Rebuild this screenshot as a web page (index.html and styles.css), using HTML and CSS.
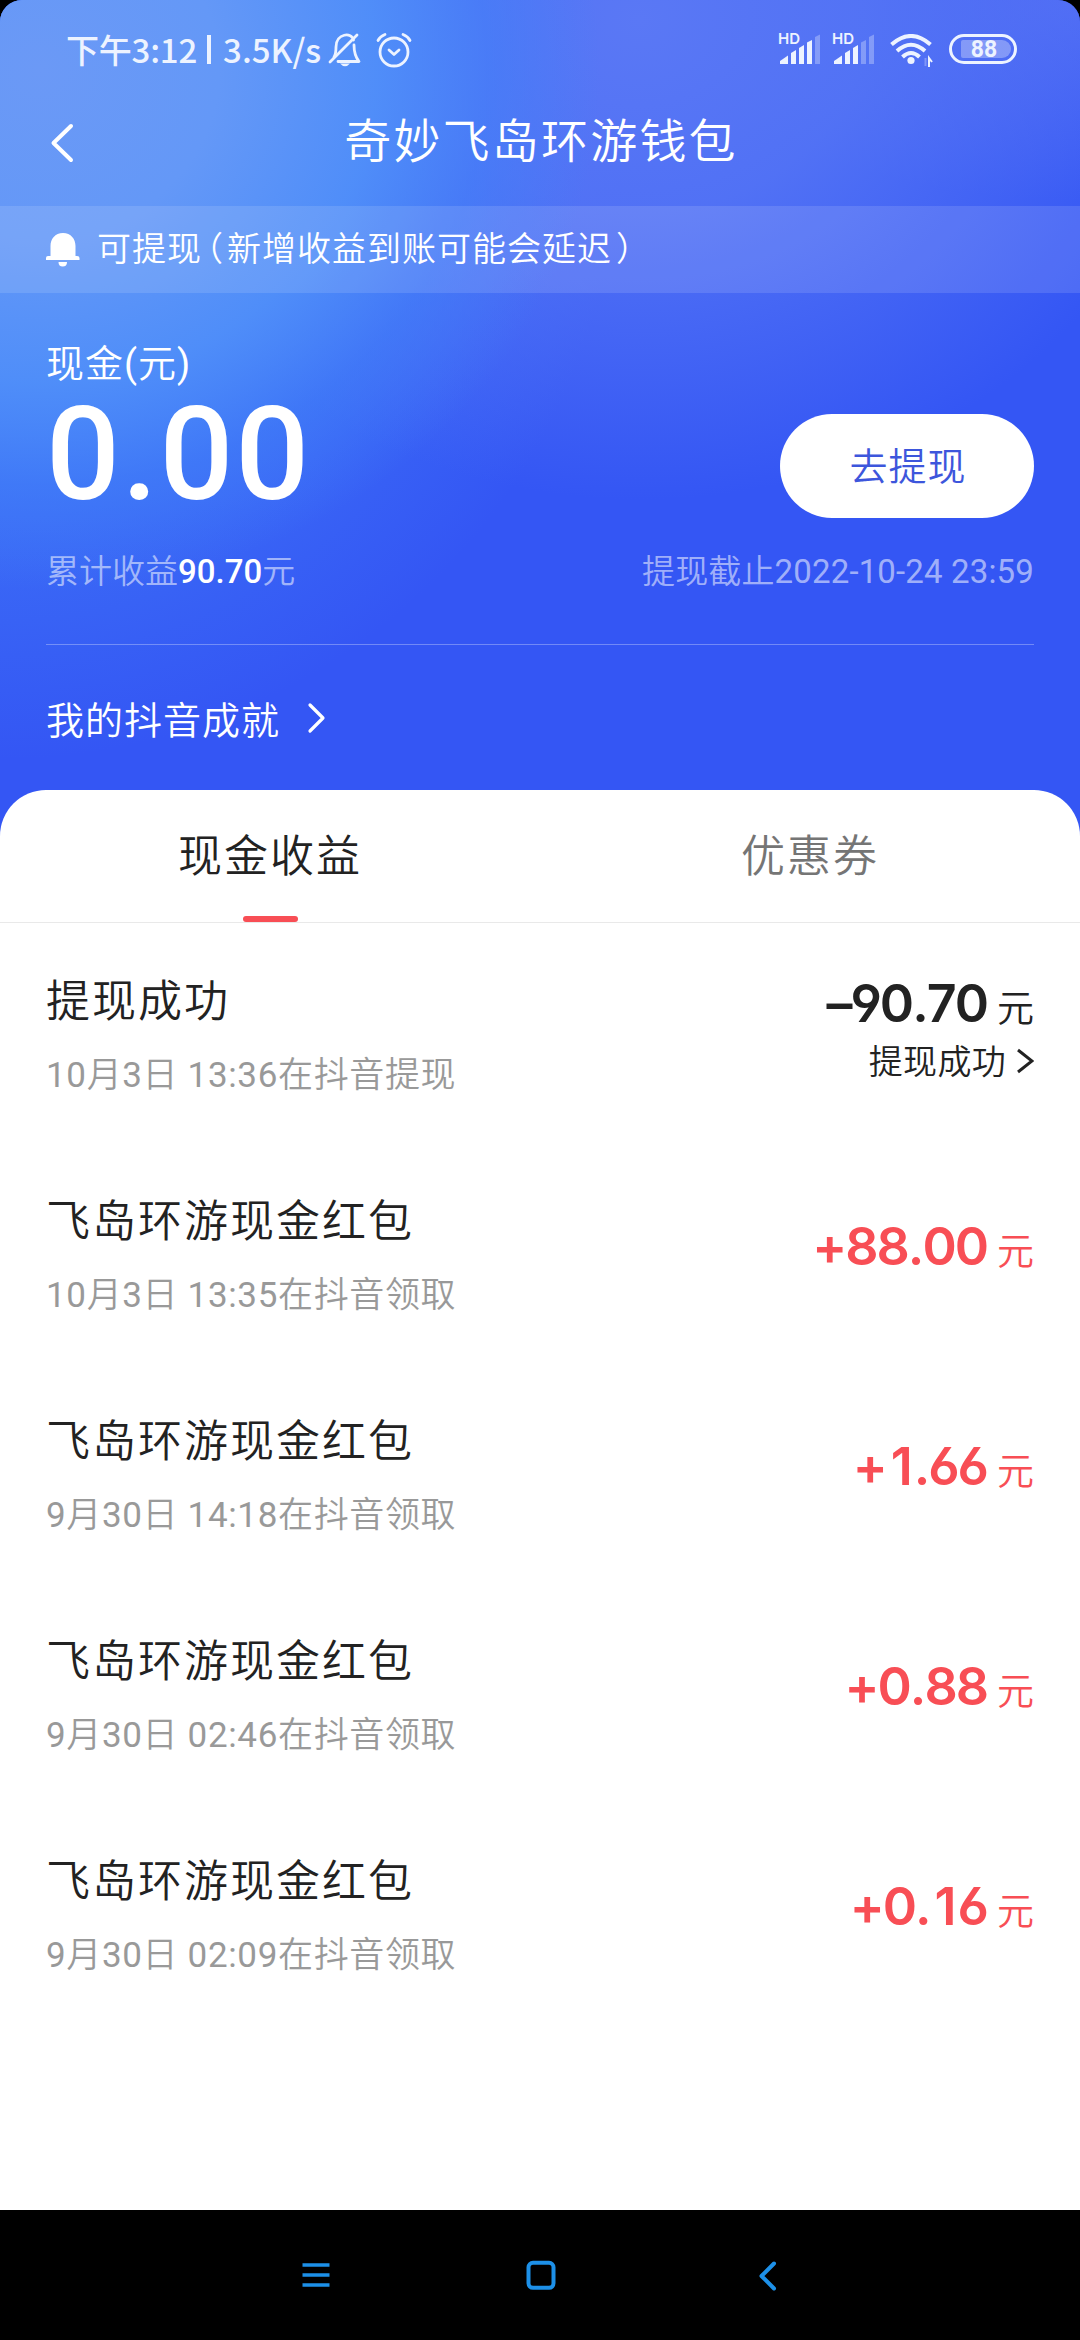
FILE: index.html
```html
<!DOCTYPE html>
<html lang="zh-CN">
<head>
<meta charset="utf-8">
<title>奇妙飞岛环游钱包</title>
<link rel="stylesheet" href="styles.css">
</head>
<body>
<div class="screen">
  <header class="hero">
    <div class="status">
      <div class="status-left">
        <span class="clock">下午3:12</span>
        <span class="bar"></span>
        <span class="speed">3.5K/s</span>
        <svg class="mute" width="34" height="36" viewBox="0 0 34 36" fill="none" stroke="currentColor" stroke-width="2.8" stroke-linecap="round" stroke-linejoin="round"><path d="M6 25 Q8 22 8 15 C8 1 24 0 25.5 8"/><path d="M26 13 C26 21 27.500 25 31 29.500 H10"/><path d="M2 30 L29 3"/><path d="M12 31.500 H22 Q17 37 12 31.500Z" fill="currentColor" stroke="none"/></svg>
        <svg class="alarm" width="36" height="36" viewBox="0 0 36 36" fill="none" stroke="currentColor" stroke-width="2.800" stroke-linecap="round" stroke-linejoin="round"><circle cx="18" cy="20" r="14"/><path d="M2 8.500 Q4 4.500 9 2.500 M34 8.500 Q32 4.500 27 2.500"/><path d="M13 18 L18 22.500 L23 18"/></svg>
      </div>
      <div class="status-right">
        <span class="signal"><span class="hd">HD</span>
          <svg width="42" height="32" viewBox="0 0 42 32" fill="currentColor"><path d="M0 31 V28 L8 22.500 V31Z"/><path d="M11 31 V20 L16 17 V31Z"/><path d="M19 31 V15 L24 12 V31Z"/><path d="M27 31 V9.500 L32 7 V31Z"/><path d="M35 31 V4 L40 1.500 V31Z" opacity=".32"/></svg></span>
        <span class="signal"><span class="hd">HD</span>
          <svg width="42" height="32" viewBox="0 0 42 32" fill="currentColor"><path d="M0 31 V28 L8 22.500 V31Z"/><path d="M11 31 V20 L16 17 V31Z"/><path d="M19 31 V15 L24 12 V31Z"/><path d="M27 31 V9.500 L32 7 V31Z" opacity=".32"/><path d="M35 31 V4 L40 1.500 V31Z" opacity=".32"/></svg></span>
        <svg class="wifi" width="44" height="34" viewBox="0 0 44 34" fill="none" stroke="currentColor" stroke-width="4"><path d="M1.500 10.500 Q21 -6.500 40.500 10.500"/><path d="M7 17 Q21 4.500 35 17"/><path d="M12.500 23 Q21 15 29.500 23"/><circle cx="21" cy="26.500" r="3.600" fill="currentColor" stroke="none"/><path d="M39 33 V24 L42 28" stroke-width="2"/><path d="M35.500 24 V32" stroke-width="2" opacity=".3"/></svg>
        <span class="battery"><span class="level">88</span></span>
      </div>
    </div>

    <div class="titlebar">
      <svg class="back" width="26" height="42" viewBox="0 0 26 42" fill="none" stroke="currentColor" stroke-width="4" stroke-linecap="round" stroke-linejoin="round"><path d="M21 4 L3.500 21 L21 38"/></svg>
      <h1>奇妙飞岛环游钱包</h1>
    </div>

    <div class="notice">
      <svg width="34" height="34" viewBox="0 0 34 34" fill="currentColor"><path d="M17 0 C9 0 4.500 6 4.500 13 V23 H2 Q0 23 0 25 V27 H33.500 V25 Q33.500 23 31 23 H29.500 V13 C29.500 6 25 0 17 0Z"/><path d="M12.500 29 H21 Q21 33.500 16.700 33.500 Q12.500 33.500 12.500 29Z"/></svg>
      <p>可提现<span class="paren">（</span>新增收益到账可能会延迟<span class="paren">）</span></p>
    </div>

    <div class="balance">
      <div class="cash">
        <div class="label">现金(元)</div>
        <div class="value">0.00</div>
      </div>
      <button class="withdraw">去提现</button>
    </div>
    <div class="meta">
      <span>累计收益<b>90.70</b>元</span>
      <span class="deadline">提现截止2022-10-24 23:59</span>
    </div>
    <div class="achieve">
      <span>我的抖音成就</span>
      <svg width="20" height="32" viewBox="0 0 20 32" fill="none" stroke="currentColor" stroke-width="3.200" stroke-linecap="round" stroke-linejoin="round"><path d="M3 3 L16 16 L3 29"/></svg>
    </div>
  </header>

  <main class="sheet">
    <nav class="tabs">
      <div class="tab active">现金收益</div>
      <div class="tab">优惠券</div>
    </nav>
    <ul class="list">
      <li class="row out">
        <div class="info"><div class="name">提现成功</div><div class="time">10月3日 13:36在抖音提现</div></div>
        <div class="side">
          <div class="amount"><b>–90.70</b><i>元</i></div>
          <div class="state">提现成功<svg width="18" height="28" viewBox="0 0 18 28" fill="none" stroke="currentColor" stroke-width="3"><path d="M2 4 L16 15 L2 26"/></svg></div>
        </div>
      </li>
      <li class="row">
        <div class="info"><div class="name">飞岛环游现金红包</div><div class="time">10月3日 13:35在抖音领取</div></div>
        <div class="side"><div class="amount"><b>+88.00</b><i>元</i></div></div>
      </li>
      <li class="row">
        <div class="info"><div class="name">飞岛环游现金红包</div><div class="time">9月30日 14:18在抖音领取</div></div>
        <div class="side"><div class="amount"><b>+<span class="one">1</span>.66</b><i>元</i></div></div>
      </li>
      <li class="row">
        <div class="info"><div class="name">飞岛环游现金红包</div><div class="time">9月30日 02:46在抖音领取</div></div>
        <div class="side"><div class="amount"><b>+0.88</b><i>元</i></div></div>
      </li>
      <li class="row">
        <div class="info"><div class="name">飞岛环游现金红包</div><div class="time">9月30日 02:09在抖音领取</div></div>
        <div class="side"><div class="amount"><b>+0.<span class="one">1</span>6</b><i>元</i></div></div>
      </li>
    </ul>
  </main>

  <footer class="navbar">
    <svg class="menu" width="30" height="30" viewBox="0 0 30 30" fill="none" stroke="currentColor" stroke-width="3.300"><path d="M1.500 5 H28.500 M1.500 15 H28.500 M1.500 25 H28.500"/></svg>
    <svg class="home" width="30" height="30" viewBox="0 0 30 30" fill="none" stroke="currentColor" stroke-width="4"><rect x="2.500" y="2.800" width="25" height="25" rx="4.500"/></svg>
    <svg width="20" height="32" viewBox="0 0 20 32" fill="none" stroke="currentColor" stroke-width="4" stroke-linecap="round" stroke-linejoin="round"><path d="M16 3.500 L3.500 16 L16 28.500"/></svg>
  </footer>
</div>
</body>
</html>
```
FILE: styles.css
```css
* { box-sizing: border-box; margin: 0; padding: 0; }

body {
  width: 1080px;
  background: #000;
  font-family: Roboto, "Noto Sans CJK SC DemiLight", "Noto Sans CJK SC", sans-serif;
  font-weight: 400;
  color: #222;
}

svg { display: block; flex: none; }

.screen {
  display: flex;
  flex-direction: column;
  width: 1080px;
  height: 2340px;
  overflow: hidden;
  border-radius: 22px 22px 0 0;
}

/* Blue wallet header */
.hero {
  height: 840px;
  flex: none;
  color: #fff;
  background:
    radial-gradient(ellipse 560px 520px at 40px 70px, #6b99f6 0%, rgba(100, 152, 247, 1) 32%, rgba(80, 143, 249, .95) 60%, rgba(66, 128, 248, .6) 80%, rgba(56, 100, 245, 0) 100%),
    radial-gradient(ellipse 560px 480px at 640px 20px, #5a78f5 0%, rgba(86, 118, 245, .85) 40%, rgba(60, 90, 245, 0) 100%),
    radial-gradient(ellipse 620px 620px at 0 140px, rgba(66, 128, 248, .9) 0%, rgba(66, 128, 248, .7) 45%, rgba(52, 86, 244, 0) 100%),
    radial-gradient(ellipse 420px 200px at 1080px 0, rgba(86, 112, 245, .8) 0%, rgba(60, 90, 245, 0) 100%),
    #3456f4;
}

.status {
  display: flex;
  justify-content: space-between;
  height: 100px;
  padding: 0 63px 0 66px;
  color: #edf3ff;
}

.status-left {
  display: flex;
  align-items: center;
  height: 99px;
  font: 500 33px/40px "Noto Sans CJK SC", sans-serif;
}
.clock { letter-spacing: -.2px; }
.clock, .speed { padding-bottom: 2px; }
.bar { width: 4px; height: 29px; margin: 0 12px 0 10px; background: currentColor; }
.mute { margin-left: 7px; }
.alarm { margin-left: 14px; }

.status-right { display: flex; align-items: flex-start; padding-top: 33px; }
.signal { position: relative; width: 42px; margin-right: 12px; }
.signal .hd {
  position: absolute;
  left: -2px;
  top: -2px;
  font: 600 15px/15px Inter, sans-serif;
}
.wifi { margin: 1px 15px 0 2px; }
.battery {
  width: 68px;
  height: 30px;
  margin-top: 1px;
  padding: 3px 2px 3px 9px;
  border: 3.500px solid currentColor;
  border-radius: 15px;
}
.level {
  display: block;
  width: 50px;
  height: 18px;
  padding-right: 4px;
  border-radius: 2px 9px 9px 2px;
  background: rgba(255, 255, 255, .3);
  font: 700 23px/20px Roboto, sans-serif;
  text-align: center;
}

.titlebar {
  display: grid;
  grid-template-columns: 60px 1fr 60px;
  align-items: center;
  height: 106px;
  padding: 0 50px 20px;
}
.titlebar h1 {
  padding: 0 0 10px 2px;
  font: 350 47px/60px "Noto Sans CJK SC", sans-serif;
  letter-spacing: 2.200px;
  text-align: center;
}

.notice {
  display: flex;
  align-items: center;
  gap: 17px;
  height: 87px;
  padding: 0 46px 0;
  background: rgba(255, 255, 255, .12);
  font: 350 34px/50px "Noto Sans CJK SC", sans-serif;
  letter-spacing: 1px;
}
.notice p { padding-bottom: 5px; }
.paren { margin: 0 3px 0 4px; font-feature-settings: "halt"; }

.balance {
  display: flex;
  justify-content: space-between;
  height: 245px;
  padding: 45px 46px 0;
}
.label { font-size: 38px; line-height: 53px; letter-spacing: 1px; }
.value {
  font-size: 130px;
  line-height: 128px;
  font-weight: 500;
  letter-spacing: 1.800px;
}
.withdraw {
  width: 254px;
  height: 104px;
  margin-top: 76px;
  padding: 0 0 4px 2px;
  border: 0;
  border-radius: 52px;
  background: #fff;
  color: #3d56dc;
  font: 350 38px/50px "Noto Sans CJK SC", sans-serif;
  letter-spacing: 1px;
}

.meta {
  display: flex;
  justify-content: space-between;
  height: 107px;
  margin: 0 46px;
  padding-top: 14px;
  border-bottom: 1px solid rgba(255, 255, 255, .3);
  color: rgba(255, 255, 255, .55);
  font-size: 33px;
  line-height: 40px;
}
.meta b { color: #fff; font-weight: 500; }
.deadline { letter-spacing: .15px; }

.achieve {
  display: flex;
  align-items: center;
  gap: 27px;
  height: 145px;
  padding: 0 46px;
  font-size: 38px;
  letter-spacing: 1px;
}

/* White sheet */
.sheet {
  flex: 1;
  margin-top: -50px;
  border-radius: 46px 46px 0 0;
  background: #fff;
}
.tabs {
  display: flex;
  height: 133px;
  border-bottom: 1px solid #e9e9e9;
}
.tab {
  display: flex;
  flex-direction: column;
  align-items: center;
  flex: 1;
  padding-top: 33px;
  font: 350 44px/60px "Noto Sans CJK SC", sans-serif;
  letter-spacing: 2px;
  color: #757575;
}
.tab.active { color: #222; }
.tab.active::after {
  content: "";
  width: 55px;
  height: 6px;
  margin-top: 33px;
  border-radius: 3px;
  background: #f84e55;
}

.list { list-style: none; }
.row {
  display: flex;
  justify-content: space-between;
  height: 220px;
  padding: 45px 46px 0;
}
.name {
  font: 350 44px/60px "Noto Sans CJK SC", sans-serif;
  letter-spacing: 2px;
}
.time {
  margin-top: 20px;
  font-size: 35px;
  line-height: 56px;
  letter-spacing: .65px;
  color: #999;
}
.side { padding-top: 29px; text-align: right; }
.amount { line-height: 60px; color: #f84e55; }
.amount b {
  font: 600 52px/60px Inter, sans-serif;
  font-feature-settings: "cv03", "cv04";
  font-kerning: none;
  letter-spacing: -2px;
}
.one { margin: 0 3px 0 5px; }
.amount i {
  margin-left: 10px;
  font: 350 37px/60px "Noto Sans CJK SC", sans-serif;
}
.out .side { padding-top: 6px; }
.out .amount { color: #222; }
.state {
  display: flex;
  align-items: center;
  justify-content: flex-end;
  gap: 10px;
  margin-top: -12px;
  font: 350 34px/50px "Noto Sans CJK SC", sans-serif;
  letter-spacing: .3px;
}

/* System navigation */
.navbar {
  display: flex;
  align-items: flex-start;
  height: 130px;
  padding: 50px 0 0 301px;
  background: #000;
  color: #1d90e8;
}
.menu { margin-right: 195px; }
.home { margin-right: 202px; }
```
